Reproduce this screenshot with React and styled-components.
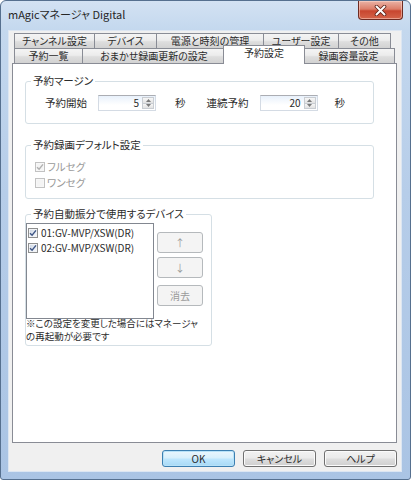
import React from 'react';
import styled, { createGlobalStyle, css } from 'styled-components';

const GlobalStyle = createGlobalStyle`
  html, body {
    margin: 0;
    padding: 0;
    background: #fff;
  }
  body {
    font-family: "Noto Sans CJK JP", "Noto Sans", sans-serif;
    font-size: 10.5px;
    font-feature-settings: "palt";
    color: #2b2b2b;
  }
  * {
    box-sizing: border-box;
  }
`;

const Window = styled.div`
  width: 411px;
  height: 480px;
  display: flex;
  flex-direction: column;
  padding: 0 8px 7px 7px;
  border: 1px solid #56708f;
  border-radius: 6px 6px 3px 3px;
  background: linear-gradient(180deg, #d3e2f3 0%, #c4d8ee 6%, #b6cde9 40%, #aac4e4 100%);
`;

const TitleBar = styled.div`
  flex: none;
  height: 29px;
  display: flex;
  align-items: flex-start;
  justify-content: space-between;
`;

const Title = styled.span`
  padding-top: 5px;
  font-size: 11px;
  line-height: 16px;
  color: #262626;
`;

const CloseButton = styled.div`
  width: 45px;
  height: 19px;
  margin-right: -1px;
  display: flex;
  align-items: center;
  justify-content: center;
  border: 1px solid #6e2b22;
  border-top: none;
  border-radius: 0 0 4px 4px;
  background: linear-gradient(180deg, #eab3a6 0%, #dc7d69 45%, #c8462f 55%, #d4644a 100%);
  box-shadow: inset 0 0 0 1px rgba(255, 220, 210, 0.5);
`;

const Client = styled.div`
  flex: 1;
  display: flex;
  flex-direction: column;
  padding-top: 2px;
  background: #f0f0f0;
  border: 1px solid #dce6f2;
`;

const TabRow = styled.div`
  display: flex;
  margin-left: 5px;
`;

const Tab = styled.div`
  flex: none;
  width: ${(p) => p.$width}px;
  height: 15px;
  margin-left: -1px;
  display: flex;
  align-items: center;
  justify-content: center;
  border: 1px solid #898c95;
  border-bottom: none;
  background: linear-gradient(180deg, #f4f4f4 0%, #ececec 45%, #dedede 55%, #d2d2d2 100%);
  font-size: 10px;
  line-height: 14px;
  white-space: nowrap;

  &:first-child {
    margin-left: 0;
  }

  ${(p) =>
    p.$active &&
    css`
      position: relative;
      z-index: 1;
      width: ${p.$width + 4}px;
      height: 19px;
      margin: -3px -2px -1px -3px;
      align-items: flex-start;
      background: #fff;
    `}
`;

const Panel = styled.div`
  width: 385px;
  height: 380px;
  margin-left: 3px;
  padding: 10px 0 0 12px;
  border: 1px solid #898c95;
  background: #fff;
`;

const Group = styled.fieldset`
  width: ${(p) => p.$width}px;
  min-width: 0;
  margin: ${(p) => p.$gap || 0}px 0 0 0;
  padding: ${(p) => p.$pad};
  border: 1px solid #d5dfe5;
  border-radius: 3px;
`;

const Legend = styled.legend`
  margin-left: 5px;
  padding: 0 2px;
  line-height: 14px;
`;

const FieldRow = styled.div`
  display: flex;
  align-items: center;
  height: 16px;
  padding-left: 19px;
`;

const Text = styled.span`
  flex: none;
  line-height: 14px;
  margin-left: ${(p) => p.$ml || 0}px;
  margin-right: ${(p) => p.$mr || 0}px;
  color: ${(p) => (p.$muted ? '#9a9a9a' : 'inherit')};
`;

const SpinField = styled.div`
  flex: none;
  width: 58px;
  height: 16px;
  display: flex;
  padding: 1px;
  border: 1px solid #d4dbe4;
  border-top-color: #abadb3;
  background: linear-gradient(180deg, #e8f1fb 0%, #ffffff 65%);
`;

const SpinValue = styled.span`
  flex: 1;
  padding-right: 3px;
  text-align: right;
  font-size: 10px;
  line-height: 12px;
`;

const SpinButtons = styled.div`
  width: 12px;
  display: flex;
  flex-direction: column;
`;

const SpinButton = styled.div`
  flex: 1;
  display: flex;
  align-items: center;
  justify-content: center;
  border: 1px solid #c9cdd2;
  background: linear-gradient(180deg, #f7f7f7, #e2e2e2);

  & + & {
    border-top: none;
  }
`;

const CheckRow = styled.div`
  display: flex;
  align-items: center;
  gap: 2px;
  height: 16px;
  padding-left: 9px;
`;

const Box = styled.span`
  flex: none;
  width: 10px;
  height: 10px;
  display: flex;
  align-items: center;
  justify-content: center;
  border: 1px solid ${(p) => (p.$disabled ? '#c2c2c2' : '#8e8f8f')};
  background: ${(p) =>
    p.$disabled
      ? '#f4f4f4'
      : 'linear-gradient(135deg, #c9d3e0 0%, #e9eef5 60%, #f8f9fb 100%)'};
  box-shadow: inset 0 0 0 1px ${(p) => (p.$disabled ? '#f7f7f7' : '#f2f4f7')};
`;

const DeviceArea = styled.div`
  display: flex;
  align-items: flex-start;
`;

const ListBox = styled.div`
  width: 128px;
  height: 96px;
  padding: 1px;
  border: 1px solid #828790;
  background: #fff;
`;

const ListItem = styled.div`
  display: flex;
  align-items: center;
  gap: 3px;
  height: 15px;
  font-size: 10px;
  white-space: nowrap;
`;

const SideButtons = styled.div`
  display: flex;
  flex-direction: column;
  margin: 9px 0 0 3px;
`;

const DialogButton = styled.div`
  flex: none;
  width: ${(p) => p.$width}px;
  height: ${(p) => p.$height}px;
  margin-top: ${(p) => p.$mt || 0}px;
  display: flex;
  align-items: center;
  justify-content: center;
  border: 1px solid #707070;
  border-radius: 3px;
  background: linear-gradient(180deg, #f2f2f2 0%, #ebebeb 45%, #dddddd 55%, #cfcfcf 100%);
  box-shadow: inset 0 0 0 1px #fbfbfb;
  font-size: 10px;
  line-height: 14px;

  ${(p) =>
    p.$default &&
    css`
      border-color: #3c7fb1;
      background: linear-gradient(180deg, #eaf6fd 0%, #d9f0fc 45%, #bee6fd 55%, #a7d9f5 100%);
      box-shadow: inset 0 0 0 1px #b8e2f8;
    `}

  ${(p) =>
    p.$disabled &&
    css`
      border-color: #b5b9bc;
      background: #f4f4f4;
      box-shadow: none;
      color: #9a9a9a;
    `}
`;

const Note = styled.div`
  margin-top: -2px;
  font-size: 10px;
  white-space: nowrap;
`;

const NoteLine = styled.div`
  height: 13px;
  line-height: 13px;
  font-size: 9.5px;
`;

const Footer = styled.div`
  display: flex;
  justify-content: flex-end;
  gap: 8px;
  margin-top: 7px;
  padding-right: 4px;
`;

const topTabs = [
  { label: 'チャンネル設定', width: 81 },
  { label: 'デバイス', width: 63 },
  { label: '電源と時刻の管理', width: 108 },
  { label: 'ユーザー設定', width: 76 },
  { label: 'その他', width: 53 },
];

const bottomTabs = [
  { label: '予約一覧', width: 69 },
  { label: 'おまかせ録画更新の設定', width: 144 },
  { label: '予約設定', width: 78, active: true },
  { label: '録画容量設定', width: 93 },
];

const devices = ['01:GV-MVP/XSW(DR)', '02:GV-MVP/XSW(DR)'];

const CloseGlyph = () => (
  <svg width="13" height="11" viewBox="0 0 13 11">
    <path d="M2.5 1.5 L10.5 9.5 M10.5 1.5 L2.5 9.5" stroke="#5a2118" strokeWidth="3.6" strokeLinecap="round" />
    <path d="M2.5 1.5 L10.5 9.5 M10.5 1.5 L2.5 9.5" stroke="#fff" strokeWidth="2" strokeLinecap="round" />
  </svg>
);

const Check = ({ checked, disabled }) => (
  <Box $disabled={disabled}>
    {checked && (
      <svg width="8" height="8" viewBox="0 0 8 8">
        <path
          d="M1 4.2 L3.1 6.3 L7 1.4"
          fill="none"
          stroke={disabled ? '#b0b0b0' : '#3e5585'}
          strokeWidth="1.4"
        />
      </svg>
    )}
  </Box>
);

const SpinBox = ({ value }) => (
  <SpinField>
    <SpinValue>{value}</SpinValue>
    <SpinButtons>
      <SpinButton>
        <svg width="5" height="3" viewBox="0 0 5 3">
          <path d="M0 3 L2.5 0 L5 3Z" fill="#7a7a7a" />
        </svg>
      </SpinButton>
      <SpinButton>
        <svg width="5" height="3" viewBox="0 0 5 3">
          <path d="M0 0 L5 0 L2.5 3Z" fill="#7a7a7a" />
        </svg>
      </SpinButton>
    </SpinButtons>
  </SpinField>
);

const App = () => {
  return (
    <>
      <GlobalStyle />
      <Window>
        <TitleBar>
          <Title>mAgicマネージャ Digital</Title>
          <CloseButton>
            <CloseGlyph />
          </CloseButton>
        </TitleBar>
        <Client>
          <TabRow>
            {topTabs.map((t) => (
              <Tab key={t.label} $width={t.width}>
                {t.label}
              </Tab>
            ))}
          </TabRow>
          <TabRow>
            {bottomTabs.map((t) => (
              <Tab key={t.label} $width={t.width} $active={t.active}>
                {t.label}
              </Tab>
            ))}
          </TabRow>
          <Panel>
            <Group $width={349} $pad="7px 0 12px 0">
              <Legend>予約マージン</Legend>
              <FieldRow>
                <Text $mr={11}>予約開始</Text>
                <SpinBox value="5" />
                <Text $ml={19}>秒</Text>
                <Text $ml={21} $mr={11}>
                  連続予約
                </Text>
                <SpinBox value="20" />
                <Text $ml={17}>秒</Text>
              </FieldRow>
            </Group>

            <Group $width={349} $gap={14} $pad="7px 0 7px 0">
              <Legend>予約録画デフォルト設定</Legend>
              <CheckRow>
                <Check checked disabled />
                <Text $muted>フルセグ</Text>
              </CheckRow>
              <CheckRow>
                <Check disabled />
                <Text $muted>ワンセグ</Text>
              </CheckRow>
            </Group>

            <Group $width={187} $gap={8} $pad="2px 0 2px 0">
              <Legend>予約自動振分で使用するデバイス</Legend>
              <DeviceArea>
                <ListBox>
                  {devices.map((d) => (
                    <ListItem key={d}>
                      <Check checked />
                      <span>{d}</span>
                    </ListItem>
                  ))}
                </ListBox>
                <SideButtons>
                  <DialogButton $width={46} $height={21} $disabled>
                    ↑
                  </DialogButton>
                  <DialogButton $width={46} $height={21} $mt={4} $disabled>
                    ↓
                  </DialogButton>
                  <DialogButton $width={46} $height={21} $mt={7} $disabled>
                    消去
                  </DialogButton>
                </SideButtons>
              </DeviceArea>
              <Note>
                <NoteLine>※この設定を変更した場合にはマネージャ</NoteLine>
                <NoteLine>の再起動が必要です</NoteLine>
              </Note>
            </Group>
          </Panel>
          <Footer>
            <DialogButton $width={73} $height={17} $default>
              OK
            </DialogButton>
            <DialogButton $width={73} $height={17}>
              キャンセル
            </DialogButton>
            <DialogButton $width={73} $height={17}>
              ヘルプ
            </DialogButton>
          </Footer>
        </Client>
      </Window>
    </>
  );
};

export default App;
